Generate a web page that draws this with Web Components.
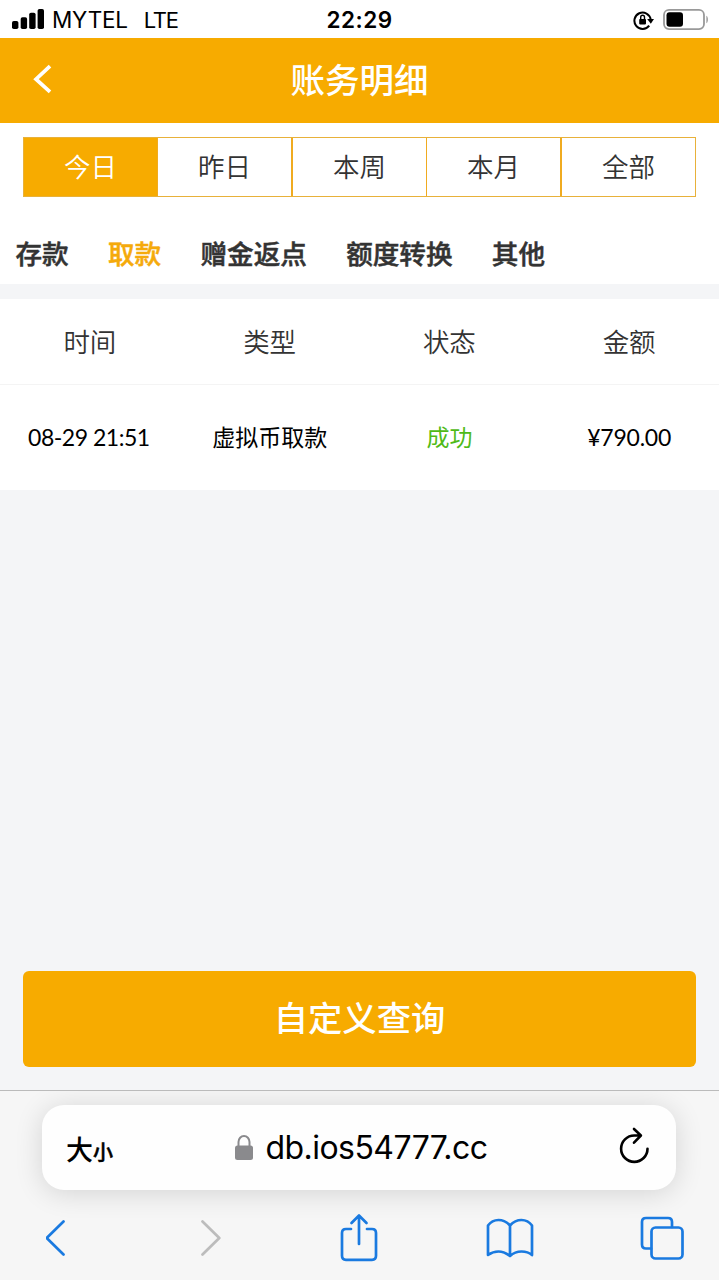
<!DOCTYPE html>
<html lang="zh-CN">
<head>
<meta charset="utf-8">
<title>账务明细</title>
<style>
html,body{margin:0;height:100%;background:#f4f5f7}
body{font-family:"Noto Sans CJK SC",sans-serif;color:#333}
</style>
</head>
<body>
<account-page></account-page>
<script>
function define(name, html) {
  customElements.define(name, class extends HTMLElement {
    constructor() {
      super();
      const t = document.createElement('template');
      t.innerHTML = html;
      this.attachShadow({ mode: 'open' }).appendChild(t.content.cloneNode(true));
    }
  });
}

define('status-bar', `
<style>
:host{display:grid;grid-template-columns:1fr auto 1fr;align-items:center;height:38px;background:#fff;color:#000;font-family:Inter,sans-serif;font-size:22.5px;line-height:38px}
.l{display:flex;align-items:center;padding-left:12px;height:38px}
.l svg{margin-right:8px}
.c{letter-spacing:-.2px}
.n{margin-left:16px;letter-spacing:-1.3px;font-size:22px}
.t{font-weight:600;font-size:22.5px;letter-spacing:.5px;padding-top:1px}
.l span{padding-top:1px}
.r{display:flex;justify-content:flex-end;align-items:center;padding-right:10px;gap:8px;height:38px}
svg{display:block}
</style>
<div class="l"><svg width="32" height="22" viewBox="0 0 32 22"><rect x="0" y="12" width="6.4" height="8" rx="1.8"/><rect x="8.7" y="8.3" width="6.4" height="11.7" rx="1.8"/><rect x="17.2" y="3.7" width="6.4" height="16.3" rx="1.8"/><rect x="25.6" y="0" width="6.4" height="20" rx="1.8"/></svg><span class="c">MYTEL</span><span class="n">LTE</span></div>
<div class="t">22:29</div>
<div class="r"><svg width="22" height="20" viewBox="0 0 22 20"><path d="M16.2 15.6A8.2 8.2 0 1 1 17.7 9.4" fill="none" stroke="#000" stroke-width="2"/><path d="M14.2 9h6.8l-3.2 4.8z"/><rect x="6.2" y="9" width="6.8" height="5.4" rx=".8"/><path d="M7.7 9V7.2a1.9 1.9 0 0 1 3.8 0V9" fill="none" stroke="#000" stroke-width="1.4"/></svg><svg width="46" height="22" viewBox="0 0 46 22"><rect x="1" y=".9" width="40" height="19.2" rx="5" fill="none" stroke="#999" stroke-width="1.8"/><rect x="3.5" y="3.2" width="16.5" height="14.6" rx="3"/><path d="M43.4 6.8c2 1 2 6.5 0 7.5z" fill="#999"/></svg></div>`);

define('page-header', `
<style>
:host{display:grid;grid-template-columns:80px 1fr 80px;align-items:center;height:85px;background:#f7ab00;color:#fff}
svg{display:block;margin:-4px 0 0 33px}
h1{margin:0;text-align:center;font-size:34.5px;font-weight:500;line-height:81px;height:85px}
</style>
<svg width="20" height="30" viewBox="0 0 20 30"><path d="M17 2.2 3 15.2l14 12.7" fill="none" stroke="#fff" stroke-width="3.7"/></svg><h1><slot></slot></h1>`);

define('range-tabs', `
<style>
:host{display:grid;grid-template-columns:134px 135px 134px 135px 133px;height:60px;box-sizing:border-box;margin:14px 23px 0;border:1px solid #e8b13a;width:673px}
::slotted(*){text-align:center;line-height:55px;font-size:26.5px;font-weight:350;border-right:1px solid #f0ab20}
::slotted(:nth-child(2n)){border-right-width:2px}
::slotted(:last-child){border-right:0}
::slotted(.on){background:#f7ab00;color:#fff}
</style><slot></slot>`);

define('category-tabs', `
<style>
:host{display:flex;gap:39.3px;height:87px;padding-left:15.5px;align-items:flex-start}
::slotted(*){font-size:26.6px;font-weight:500;-webkit-text-stroke:.5px currentColor;line-height:60px;margin-top:26px}
::slotted(.on){color:#f5aa0b}
</style><slot></slot>`);

define('record-row', `
<style>
:host{display:grid;grid-template-columns:repeat(4,1fr);height:105px;background:#fff;color:#000;text-align:center;font-family:Lato,"Noto Sans CJK SC",sans-serif;font-size:23px;line-height:104px}
:host([head]){height:85px;border-bottom:1.5px solid #f4f4f4;color:#333;font-size:26.5px;line-height:87px;font-weight:350}
::slotted(.ok){color:#4fba17}
::slotted(.d){letter-spacing:-.48px;margin-right:2px}
::slotted(.m){letter-spacing:-.25px}
</style><slot></slot>`);

define('query-button', `
<style>
:host{display:block;margin:0 23px 23px;height:96px;border-radius:6px;background:#f7ab00}
button{all:unset;display:block;width:100%;text-align:center;color:#fff;font-size:34.3px;font-weight:500;line-height:91px}
</style><button><slot></slot></button>`);

define('browser-bar', `
<style>
:host{display:block;height:190px;box-sizing:border-box;border-top:1px solid #bbb;background:#f6f6f6;overflow:hidden;color:#000}
.a{display:grid;grid-template-columns:100px 1fr 100px;align-items:center;margin:14px 43px 0 42px;height:85px;border-radius:22px;background:#fefefe;box-shadow:0 3px 28px rgba(0,0,0,.14)}
.s{display:flex;align-items:baseline;padding-left:24px;font-weight:500;line-height:88px;height:85px}
.b{font-size:27px}.m{font-size:20px;-webkit-text-stroke:.5px #000}
.u{display:flex;align-items:center;justify-content:center;gap:12px;padding-left:5px;font-family:Inter,sans-serif;font-size:32px;line-height:87px;height:85px}
.x{letter-spacing:-.55px}
svg{display:block;fill:none;stroke-linecap:round;stroke-linejoin:round}
.rl{justify-self:end;margin-right:26px;margin-top:-4px}
nav{display:grid;grid-template-columns:155px 139px 146px 154px 44px;align-items:center;margin:21px 35px 0 46px;height:54px;color:#1a7ae0}
nav svg{stroke:currentColor;stroke-width:2.7}
nav .f{color:#bcbcbc}
</style>
<div class="a"><div class="s"><span class="b">大</span><span class="m">小</span></div>
<div class="u"><svg width="18" height="26" viewBox="0 0 18 26"><rect x="0" y="10.5" width="18" height="14.5" rx="2.5" fill="#8a8a8d"/><path d="M3.5 11.5V7a5.5 6 0 0 1 11 0v4.5" stroke="#8a8a8d" stroke-width="2"/></svg><span class="x">db.ios54777.cc</span></div>
<svg class="rl" width="32" height="38" viewBox="0 0 32 38" stroke="#000" stroke-width="2.6"><path d="M29.5 21.7A13.2 13.2 0 1 1 16.3 8.5h6.5M16 2l6.9 6.5-6.9 7.2"/></svg></div>
<nav><svg width="20" height="38" viewBox="0 0 20 38"><path d="M17.5 2.5.7 19l16.8 16.5"/></svg>
<svg class="f" width="20" height="38" viewBox="0 0 20 38"><path d="M1.5 2.5 18.3 19 1.5 35.5"/></svg>
<svg width="38" height="50" viewBox="0 0 38 50"><path d="M11 16H6q-4 0-4 4v22.8q0 4 4 4h26q4 0 4-4V20q0-4-4-4h-5M19 31V2.5M11.5 10 19 2.5l7.5 7.5"/></svg>
<svg width="48" height="42" viewBox="0 0 48 42"><path d="M24 8.5Q19 3 12.5 3T2 8.5V38q5-3.5 10.5-3.5T24 39q5-4.5 11.5-4.5T46 38V8.5Q42 3 35.5 3T24 8.5V39"/></svg>
<svg width="44" height="44" viewBox="0 0 44 44"><path d="M11 32.5H6q-4 0-4-4V6q0-4 4-4h22q4 0 4 4v5"/><rect x="11.5" y="11.5" width="31" height="31" rx="4"/></svg></nav>`);

define('account-page', `
<style>
:host{display:flex;flex-direction:column;width:719px;height:1280px;overflow:hidden}
.top{background:#fff;height:161px;display:flex;flex-direction:column;margin-bottom:15px}
query-button{margin-top:auto}
</style>
<status-bar></status-bar>
<page-header>账务明细</page-header>
<div class="top">
<range-tabs><span class="on">今日</span><span>昨日</span><span>本周</span><span>本月</span><span>全部</span></range-tabs>
<category-tabs><span>存款</span><span class="on">取款</span><span>赠金返点</span><span>额度转换</span><span>其他</span></category-tabs>
</div>
<record-row head><span>时间</span><span>类型</span><span>状态</span><span>金额</span></record-row>
<record-row><span class="d">08-29 21:51</span><span>虚拟币取款</span><span class="ok">成功</span><span class="m">¥790.00</span></record-row>
<query-button>自定义查询</query-button>
<browser-bar></browser-bar>`);
</script>
</body>
</html>
